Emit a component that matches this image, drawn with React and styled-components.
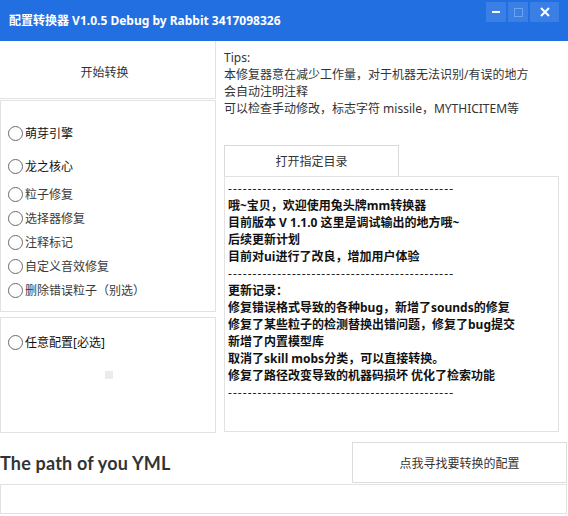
import React from "react";
import styled, { createGlobalStyle } from "styled-components";

const Global = createGlobalStyle`
  html, body {
    margin: 0;
    padding: 0;
    background: #fff;
  }
  body {
    font-family: "Noto Sans", "Noto Sans CJK SC", sans-serif;
  }
`;

const Window = styled.div`
  width: 568px;
  height: 516px;
  background: #fff;
  overflow: hidden;
  display: flex;
  flex-direction: column;
`;

const TitleBar = styled.div`
  height: 41px;
  flex-shrink: 0;
  background: #216fe0;
  display: flex;
  justify-content: space-between;
  align-items: flex-start;
  padding: 0 9px 0 9px;
`;

const Title = styled.div`
  line-height: 42px;
  color: #fff;
  font-size: 12px;
  font-weight: 700;
  font-family: "Noto Sans", "Noto Sans CJK SC", sans-serif;
`;

const Controls = styled.div`
  display: flex;
  gap: 2px;
  margin-top: 2px;
`;

const CtrlButton = styled.div`
  width: ${(p) => (p.wide ? "29px" : "20px")};
  height: 20px;
  background: #3a7fe6;
  display: flex;
  align-items: center;
  justify-content: center;
`;

const Body = styled.div`
  display: flex;
  gap: 8px;
  padding-right: 9px;
`;

const LeftCol = styled.div`
  width: 216px;
  flex-shrink: 0;
  display: flex;
  flex-direction: column;
`;

const StartButton = styled.div`
  height: 58px;
  box-sizing: border-box;
  border-right: 1px solid #e2e2e2;
  border-bottom: 1px solid #e2e2e2;
  display: flex;
  align-items: center;
  justify-content: center;
  font-size: 12px;
  color: #333;
  padding: 5px 6px 0 0;
`;

const GroupBox = styled.div`
  box-sizing: border-box;
  height: ${(p) => p.h}px;
  margin-top: ${(p) => p.top}px;
  border: 1px solid #e2e2e2;
  padding-top: ${(p) => p.pad}px;
  display: flex;
  flex-direction: column;
`;

const RadioRow = styled.label`
  height: 24px;
  display: flex;
  align-items: center;
  gap: 2px;
  padding-left: 7px;
  margin-top: ${(p) => p.gap || 0}px;
  font-size: 12px;
  color: ${(p) => (p.dark ? "#111" : "#3a3a3a")};
`;

const Circle = styled.span`
  width: 15px;
  height: 15px;
  box-sizing: border-box;
  border: 1.4px solid #6a6a6a;
  border-radius: 50%;
  flex-shrink: 0;
`;

const Dot = styled.div`
  width: 8px;
  height: 8px;
  background: #ebebeb;
  margin: 17px 0 0 104px;
`;

const RightCol = styled.div`
  flex: 1;
  display: flex;
  flex-direction: column;
`;

const Tips = styled.div`
  padding-top: 8px;
  font-size: 12px;
  line-height: 17px;
  color: #333;
`;

const OpenButton = styled.div`
  width: 175px;
  height: 31px;
  box-sizing: border-box;
  margin-top: 28px;
  border: 1px solid #d9d9d9;
  border-bottom: none;
  display: flex;
  align-items: center;
  justify-content: center;
  font-size: 12px;
  color: #333;
`;

const LogBox = styled.div`
  height: 256px;
  box-sizing: border-box;
  border: 1px solid #e2e2e2;
  padding: 3px 0 0 3px;
  font-size: 12px;
  font-weight: 700;
  line-height: 17px;
  color: #111;
  white-space: pre;
`;

const LogLine = styled.div`
  height: 17px;
`;

const Rule = styled.div`
  height: 17px;
  font-weight: 400;
  letter-spacing: 1.05px;
  color: #222;
`;

const Bottom = styled.div`
  display: flex;
  flex-direction: column;
  padding-right: 1px;
`;

const PathRow = styled.div`
  display: flex;
  justify-content: space-between;
  align-items: center;
  margin-top: 9px;
`;

const PathLabel = styled.div`
  font-family: "Lato", sans-serif;
  font-size: 18px;
  font-weight: 700;
  color: #333;
  letter-spacing: 0.2px;
`;

const FindButton = styled.div`
  width: 215px;
  height: 41px;
  box-sizing: border-box;
  border: 1px solid #dcdcdc;
  display: flex;
  align-items: center;
  justify-content: center;
  font-size: 12px;
  color: #333;
`;

const PathInput = styled.div`
  height: 30px;
  box-sizing: border-box;
  border: 1px solid #e2e2e2;
  margin-top: 1px;
`;

const options = [
  { label: "萌芽引擎", dark: true, gap: 0 },
  { label: "龙之核心", dark: true, gap: 9 },
  { label: "粒子修复", gap: 4 },
  { label: "选择器修复" },
  { label: "注释标记" },
  { label: "自定义音效修复" },
  { label: "删除错误粒子（别选）" },
];

const RULE = "---";
const dashes = "-".repeat(46);

const log = [
  RULE,
  "哦~宝贝，欢迎使用兔头牌mm转换器",
  "目前版本 V 1.1.0 这里是调试输出的地方哦~",
  "后续更新计划",
  "目前对ui进行了改良，增加用户体验",
  RULE,
  "更新记录：",
  "修复错误格式导致的各种bug，新增了sounds的修复",
  "修复了某些粒子的检测替换出错问题，修复了bug提交",
  "新增了内置模型库",
  "取消了skill mobs分类，可以直接转换。",
  "修复了路径改变导致的机器码损坏 优化了检索功能",
  RULE,
];

export default function App() {
  return (
    <Window>
      <Global />
      <TitleBar>
        <Title>配置转换器 V1.0.5 Debug by Rabbit 3417098326</Title>
        <Controls>
          <CtrlButton>
            <svg width="8" height="2" viewBox="0 0 8 2">
              <rect width="8" height="2" fill="#fff" />
            </svg>
          </CtrlButton>
          <CtrlButton>
            <svg width="9" height="9" viewBox="0 0 9 9">
              <rect x="0.5" y="0.5" width="8" height="8" fill="none" stroke="#6fa3ef" />
            </svg>
          </CtrlButton>
          <CtrlButton wide>
            <svg width="10" height="10" viewBox="0 0 10 10">
              <path d="M1 1 L9 9 M9 1 L1 9" stroke="#fff" strokeWidth="2" />
            </svg>
          </CtrlButton>
        </Controls>
      </TitleBar>

      <Body>
        <LeftCol>
          <StartButton>开始转换</StartButton>
          <GroupBox h={212} top={1} pad={20}>
            {options.map((o) => (
              <RadioRow key={o.label} dark={o.dark} gap={o.gap}>
                <Circle />
                {o.label}
              </RadioRow>
            ))}
          </GroupBox>
          <GroupBox h={116} top={5} pad={12}>
            <RadioRow dark>
              <Circle />
              任意配置[必选]
            </RadioRow>
            <Dot />
          </GroupBox>
        </LeftCol>

        <RightCol>
          <Tips>
            Tips:
            <br />
            本修复器意在减少工作量，对于机器无法识别/有误的地方
            <br />
            会自动注明注释
            <br />
            可以检查手动修改，标志字符 missile，MYTHICITEM等
          </Tips>
          <OpenButton>打开指定目录</OpenButton>
          <LogBox>
            {log.map((line, i) =>
              line === RULE ? (
                <Rule key={i}>{dashes}</Rule>
              ) : (
                <LogLine key={i}>{line}</LogLine>
              )
            )}
          </LogBox>
        </RightCol>
      </Body>

      <Bottom>
        <PathRow>
          <PathLabel>The path of you YML</PathLabel>
          <FindButton>点我寻找要转换的配置</FindButton>
        </PathRow>
        <PathInput />
      </Bottom>
    </Window>
  );
}
